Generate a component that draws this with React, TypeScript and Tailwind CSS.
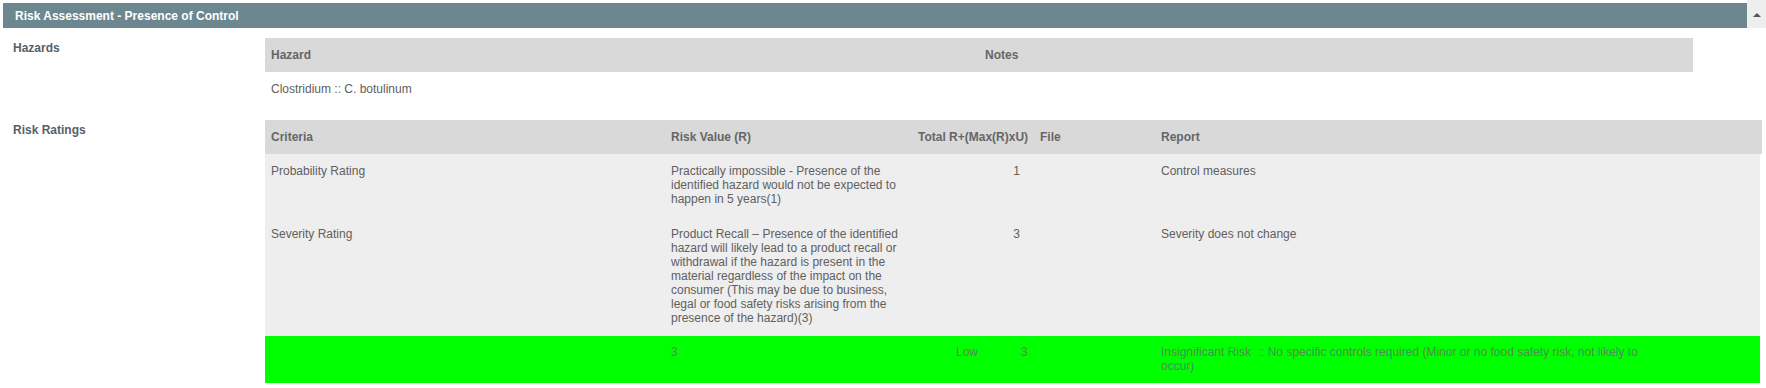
import React from "react";

const rows = [
  {
    criteria: "Probability Rating",
    value:
      "Practically impossible - Presence of the identified hazard would not be expected to happen in 5 years(1)",
    total: "1",
    report: "Control measures",
  },
  {
    criteria: "Severity Rating",
    value:
      "Product Recall \u2013 Presence of the identified hazard will likely lead to a product recall or withdrawal if the hazard is present in the material regardless of the impact on the consumer (This may be due to business, legal or food safety risks arising from the presence of the hazard)(3)",
    total: "3",
    report: "Severity does not change",
  },
];

export default function App() {
  return (
    <div className="w-[1766px] h-[388px] overflow-hidden bg-white font-['Liberation_Sans',Arial,sans-serif] text-[12px] leading-[14px] text-[#606060]">
      {/* title bar */}
      <div className="flex items-start">
        <div className="pt-[3px] pl-[3px]">
          <div className="flex h-[25px] w-[1744px] items-center bg-[#6c878f] pl-[12px] font-bold text-white">
            Risk Assessment - Presence of Control
          </div>
        </div>
        <div className="flex h-[28px] w-[19px] items-start justify-center bg-[#eeeeee] pt-[13px]">
          <svg width="8" height="4" viewBox="0 0 8 4">
            <polygon points="4,0 8,4 0,4" fill="#555" />
          </svg>
        </div>
      </div>

      {/* hazards */}
      <div className="mt-[10px] flex">
        <div className="w-[265px] pl-[13px] pt-[3px] font-bold text-[#56616b]">Hazards</div>
        <div className="w-[1428px]">
          <div className="grid h-[34px] grid-cols-2 items-center bg-[#d9d9d9] font-bold text-[#666]">
            <div className="pl-[6px]">Hazard</div>
            <div className="pl-[6px]">Notes</div>
          </div>
          <div className="grid grid-cols-2 pt-[10px] pb-[10px]">
            <div className="pl-[6px]">Clostridium :: C. botulinum</div>
            <div></div>
          </div>
        </div>
      </div>

      {/* risk ratings */}
      <div className="mt-[14px] flex">
        <div className="w-[265px] pl-[13px] pt-[3px] font-bold text-[#56616b]">Risk Ratings</div>
        <div className="w-[1497px]">
          <div className="grid h-[34px] grid-cols-[400px_247px_122px_121px_1fr] items-center bg-[#d9d9d9] font-bold text-[#666]">
            <div className="pl-[6px]">Criteria</div>
            <div className="pl-[6px]">Risk Value (R)</div>
            <div className="whitespace-nowrap pl-[6px]">Total R+(Max(R)xU)</div>
            <div className="pl-[6px]">File</div>
            <div className="pl-[6px]">Report</div>
          </div>
          <div className="mr-[2px] bg-[#eeeeee]">
            {rows.map((r) => (
              <div
                key={r.criteria}
                className="grid grid-cols-[400px_247px_122px_121px_1fr] pt-[10px] pb-[11px]"
              >
                <div className="pl-[6px]">{r.criteria}</div>
                <div className="pl-[6px] pr-[6px]">{r.value}</div>
                <div className="pr-[14px] text-right">{r.total}</div>
                <div></div>
                <div className="pl-[6px]">{r.report}</div>
              </div>
            ))}
          </div>
          <div className="mr-[2px] grid grid-cols-[400px_247px_122px_121px_1fr] bg-[#00ff00] pt-[9px] pb-[10px] text-[#578a57]">
            <div></div>
            <div className="pl-[6px]">3</div>
            <div className="flex">
              <span className="ml-[44px] w-[65px]">Low</span>
              <span>3</span>
            </div>
            <div></div>
            <div className="max-w-[490px] pl-[6px]">
              Insignificant Risk&nbsp; :: No specific controls required (Minor or no food safety risk, not likely to occur)
            </div>
          </div>
        </div>
      </div>
    </div>
  );
}
